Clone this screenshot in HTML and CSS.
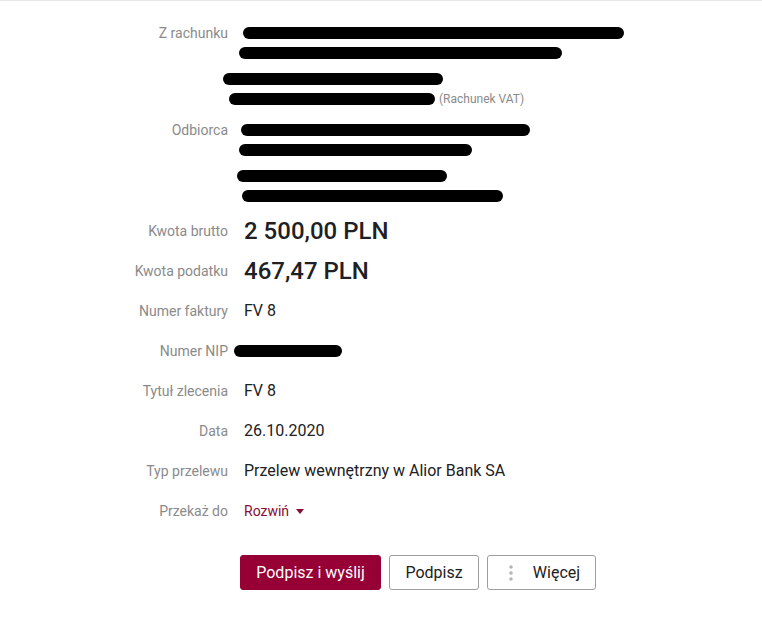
FILE: index.html
```html
<!DOCTYPE html>
<html lang="pl">
<head>
<meta charset="utf-8">
<link rel="stylesheet" href="styles.css">
</head>
<body>
<div class="topline"></div>
<div class="details">
  <div class="row row-block first">
    <div class="label">Z rachunku</div>
    <div class="value">
      <div class="group">
        <div class="line"><span class="redact r-a1"></span></div>
        <div class="line"><span class="redact r-a2"></span></div>
      </div>
      <div class="group">
        <div class="line"><span class="redact r-a3"></span></div>
        <div class="line"><span class="redact r-a4"></span><span class="note">(Rachunek VAT)</span></div>
      </div>
    </div>
  </div>
  <div class="row row-block second">
    <div class="label">Odbiorca</div>
    <div class="value">
      <div class="group">
        <div class="line"><span class="redact r-b1"></span></div>
        <div class="line"><span class="redact r-b2"></span></div>
      </div>
      <div class="group">
        <div class="line"><span class="redact r-b3"></span></div>
        <div class="line"><span class="redact r-b4"></span></div>
      </div>
    </div>
  </div>
  <div class="row">
    <div class="label">Kwota brutto</div>
    <div class="value amount">2 500,00 PLN</div>
  </div>
  <div class="row">
    <div class="label">Kwota podatku</div>
    <div class="value amount">467,47 PLN</div>
  </div>
  <div class="row">
    <div class="label">Numer faktury</div>
    <div class="value">FV 8</div>
  </div>
  <div class="row">
    <div class="label">Numer NIP</div>
    <div class="value"><span class="redact r-nip"></span></div>
  </div>
  <div class="row">
    <div class="label">Tytuł zlecenia</div>
    <div class="value">FV 8</div>
  </div>
  <div class="row">
    <div class="label">Data</div>
    <div class="value">26.10.2020</div>
  </div>
  <div class="row">
    <div class="label">Typ przelewu</div>
    <div class="value">Przelew wewnętrzny w Alior Bank SA</div>
  </div>
  <div class="row">
    <div class="label">Przekaż do</div>
    <div class="value"><span class="expand">Rozwiń <span class="caret"></span></span></div>
  </div>
  <div class="actions">
    <button class="btn btn-primary">Podpisz i wyślij</button>
    <button class="btn btn-sign">Podpisz</button>
    <button class="btn btn-more"><svg class="dots" width="4" height="16" viewBox="0 0 4 16"><circle cx="2" cy="2" r="1.8" fill="#b5b5b5"/><circle cx="2" cy="8" r="1.8" fill="#b5b5b5"/><circle cx="2" cy="14" r="1.8" fill="#b5b5b5"/></svg><span>Więcej</span></button>
  </div>
</div>
</body>
</html>
```

FILE: styles.css
```css
html, body {
  margin: 0;
  padding: 0;
  background: #fff;
}
body {
  font-family: Roboto, "Liberation Sans", Arial, sans-serif;
  color: #212121;
  width: 762px;
  height: 620px;
  overflow: hidden;
}
.topline {
  height: 1px;
  background: #e6e6e6;
}
.details {
  padding-left: 8px;
}
.row {
  display: grid;
  grid-template-columns: 220px 1fr;
  column-gap: 16px;
  align-items: center;
  height: 40px;
}
.row-block {
  height: auto;
  align-items: start;
}
.row-block.first {
  margin-top: 22px;
  margin-bottom: 11px;
}
.row-block.second {
  margin-bottom: 5px;
}
.label {
  text-align: right;
  font-size: 14px;
  line-height: 20px;
  color: #8a8a8a;
}
.value {
  font-size: 16px;
  line-height: 20px;
  color: #212121;
  display: flex;
  align-items: center;
}
.row-block .value {
  display: block;
}
.group + .group {
  margin-top: 6px;
}
.line {
  height: 20px;
  display: flex;
  align-items: center;
}
.redact {
  display: block;
  height: 12px;
  background: #000;
  border-radius: 6px;
  flex: none;
}
.r-a1 { width: 381px; margin-left: -1px; }
.r-a2 { width: 323px; margin-left: -5px; }
.r-a3 { width: 220px; margin-left: -21px; }
.r-a4 { width: 206px; margin-left: -15px; }
.r-b1 { width: 289px; margin-left: -3px; }
.r-b2 { width: 233px; margin-left: -5px; }
.r-b3 { width: 210px; margin-left: -7px; }
.r-b4 { width: 261px; margin-left: -2px; }
.r-nip { width: 108px; margin-left: -10px; }
.note {
  font-size: 12px;
  color: #8a8a8a;
  margin-left: 4px;
}
.amount {
  font-size: 24px;
  font-weight: 500;
  line-height: 28px;
  color: #1f1f24;
}
.expand {
  color: #8b0a33;
  font-size: 14px;
  display: inline-flex;
  align-items: center;
}
.caret {
  display: inline-block;
  width: 0;
  height: 0;
  border-left: 4.5px solid transparent;
  border-right: 4.5px solid transparent;
  border-top: 5px solid #8b0a33;
  margin-left: 7px;
}
.actions {
  display: flex;
  gap: 8px;
  padding-left: 232px;
  margin-top: 24px;
}
.btn {
  height: 35px;
  font-family: Roboto, "Liberation Sans", Arial, sans-serif;
  font-size: 16px;
  border-radius: 3px;
  padding: 0;
  display: flex;
  align-items: center;
  justify-content: center;
  cursor: pointer;
}
.btn-primary {
  width: 141px;
  background: #960034;
  border: 1px solid #960034;
  color: #fff;
}
.btn-sign {
  width: 90px;
  background: #fff;
  border: 1px solid #9e9e9e;
  color: #212121;
}
.btn-more {
  width: 109px;
  background: #fff;
  border: 1px solid #9e9e9e;
  color: #212121;
  gap: 20px;
  padding-left: 6px;
}
```
